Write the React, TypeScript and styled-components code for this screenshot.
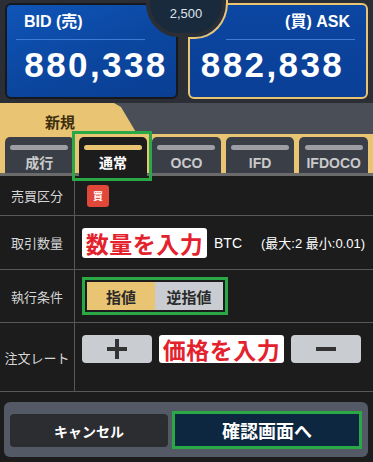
import styled, { createGlobalStyle } from "styled-components";

const GlobalStyle = createGlobalStyle`
    html, body {
        margin: 0;
        padding: 0;
        background: #1c1c1c;
    }
    * {
        box-sizing: border-box;
    }
`;

const Palette = {
    HeaderBg: "#2b2e34",
    Gold: "#e8c473",
    TabBar: "#4a4e57",
    TabBg: "#3a3e46",
    Table: "#1c1c1c",
    Line: "#585858",
    Green: "#2aa845",
    Red: "#e3222d",
    Button: "#c9ccd1",
};

const FONT = `"Liberation Sans", "Noto Sans CJK JP", sans-serif`;

const Page = styled.div`
    width: 373px;
    height: 462px;
    overflow: hidden;
    background: ${Palette.Table};
    font-family: ${FONT};
    display: flex;
    flex-direction: column;
`;

const PriceHeader = styled.header`
    position: relative;
    display: flex;
    gap: 10px;
    padding: 3px 5px 4px;
    background: ${Palette.HeaderBg};
`;

const PriceCard = styled.div<{ $side: "bid" | "ask" }>`
    height: 96px;
    border-radius: 6px;
    display: flex;
    flex-direction: column;
    align-items: ${(p) => (p.$side === "bid" ? "flex-start" : "flex-end")};
    width: ${(p) => (p.$side === "bid" ? "173px" : "auto")};
    flex: ${(p) => (p.$side === "bid" ? "none" : "1")};
    border: 2px solid ${(p) => (p.$side === "bid" ? "#15181d" : Palette.Gold)};
    background: ${(p) =>
        p.$side === "bid"
            ? "linear-gradient(160deg, #0f55b8 0%, #0b469f 55%, #0a3f93 100%)"
            : "linear-gradient(180deg, #0b46a2 0%, #0a3f96 100%)"};
    padding: ${(p) => (p.$side === "bid" ? "0 0 0 9px" : "0 11px 0 0")};
`;

const CardLabel = styled.div<{ $side: "bid" | "ask" }>`
    margin-top: 7px;
    height: 20px;
    line-height: 20px;
    font-size: 16px;
    font-weight: 700;
    color: #ffffff;
    padding: ${(p) => (p.$side === "bid" ? "0 0 0 8px" : "0 5px 0 0")};
`;

const CardRule = styled.div`
    margin-top: 7px;
    width: 129px;
    height: 1px;
    background: #3d7bd6;
`;

const CardPrice = styled.div`
    align-self: stretch;
    margin: 5px 0 0;
    height: 40px;
    line-height: 40px;
    text-align: center;
    font-size: 35px;
    font-weight: 700;
    letter-spacing: 2.4px;
    color: #ffffff;
`;

const Spread = styled.div`
    position: absolute;
    top: 0;
    left: 150px;
    width: 72px;
    height: 33px;
    background: #1a2a3d;
    border-radius: 0 0 28px 28px / 0 0 30px 30px;
    box-shadow: 0 0 0 4px ${Palette.HeaderBg};
    display: flex;
    justify-content: center;
    padding-top: 6px;
    font-size: 13px;
    color: #dfe4ea;

    &::after {
        content: "";
        position: absolute;
        top: -10px;
        left: -6px;
        right: -6px;
        bottom: -6px;
        border-right: 2px solid ${Palette.Gold};
        border-bottom: 2px solid ${Palette.Gold};
        border-radius: 0 0 33px 33px / 0 0 36px 36px;
        clip-path: inset(0 0 0 44px);
    }
`;

const TabBar = styled.div`
    height: 31px;
    background: ${Palette.TabBar};
    display: flex;
`;

const NewTab = styled.div`
    width: 137px;
    height: 100%;
    background: ${Palette.Gold};
    clip-path: polygon(0 0, 114px 0, 121px 4px, 137px 100%, 0 100%);
    display: flex;
    align-items: center;
    padding: 6px 0 0 45px;
    font-size: 15px;
    font-weight: 700;
    color: #3d2f0c;
`;

const TabRow = styled.div`
    display: flex;
    gap: 5px;
    padding: 3px 5px 0;
    height: 39px;
    background: ${Palette.Gold};
`;

const Tab = styled.div<{ $active?: boolean }>`
    position: relative;
    z-index: ${(p) => (p.$active ? 2 : 0)};
    flex: 1;
    margin-bottom: ${(p) => (p.$active ? "-3px" : "0")};
    border-radius: 5px 5px 0 0;
    background: ${(p) => (p.$active ? "#1c1c1c" : Palette.TabBg)};
    display: flex;
    flex-direction: column;
    align-items: center;
    padding-top: 8px;
    font-size: 14px;
    line-height: 18px;
    font-weight: 700;
    color: ${(p) => (p.$active ? "#ffffff" : "#c9cacc")};

    &::before {
        content: "";
        width: 58px;
        height: 5px;
        border-radius: 3px;
        background: ${(p) => (p.$active ? Palette.Gold : "#9c9ea3")};
        margin-bottom: 4px;
    }

    ${(p) =>
        p.$active &&
        `
        &::after {
            content: "";
            position: absolute;
            top: -6px;
            left: -7px;
            right: -5px;
            bottom: -5px;
            border: 3px solid ${Palette.Green};
        }
    `}
`;

const TabDivider = styled.div`
    height: 3px;
    background: #6b6b6b;
`;

const Row = styled.div<{ $height: number }>`
    display: grid;
    grid-template-columns: 75px 1fr;
    height: ${(p) => p.$height}px;
    border-bottom: 1px solid ${Palette.Line};
`;

const Label = styled.div`
    border-right: 1px solid ${Palette.Line};
    display: flex;
    align-items: center;
    justify-content: center;
    font-size: 13px;
    color: #d6d6d6;
    white-space: nowrap;
`;

const Cell = styled.div<{ $top?: number }>`
    display: flex;
    align-items: ${(p) => (p.$top ? "flex-start" : "center")};
    padding: ${(p) => (p.$top ? `${p.$top}px 0 0 7px` : "0 0 0 7px")};
    gap: 7px;
    color: #ffffff;
`;

const Badge = styled.div`
    margin-left: 5px;
    width: 22px;
    height: 22px;
    border-radius: 3px;
    background: #e2483a;
    display: flex;
    align-items: center;
    justify-content: center;
    font-size: 10px;
    font-weight: 700;
    color: #ffffff;
`;

const InputBox = styled.div`
    width: 125px;
    height: 30px;
    border-radius: 3px;
    background: #ffffff;
    display: flex;
    align-items: center;
    justify-content: center;
    font-size: 23px;
    font-weight: 700;
    color: ${Palette.Red};
    white-space: nowrap;
    letter-spacing: 0.5px;
`;

const Unit = styled.span`
    font-size: 14px;
`;

const Limits = styled.span`
    margin-left: 12px;
    font-size: 13px;
    white-space: nowrap;
`;

const Highlight = styled.div`
    border: 3px solid ${Palette.Green};
    padding: 2px;
    display: flex;
`;

const Segment = styled.div<{ $active?: boolean }>`
    width: 68px;
    height: 28px;
    display: flex;
    align-items: center;
    justify-content: center;
    background: ${(p) => (p.$active ? Palette.Gold : Palette.Button)};
    font-size: 15px;
    font-weight: 700;
    color: #2a2a2a;
`;

const StepButton = styled.div`
    width: 70px;
    height: 28px;
    border-radius: 4px;
    background: ${Palette.Button};
    display: flex;
    align-items: center;
    justify-content: center;
`;

const RateBox = styled(InputBox)`
    height: 28px;
`;

const Footer = styled.div`
    margin: 10px 5px 0 4px;
    height: 55px;
    border-radius: 6px;
    background: #545966;
    display: flex;
    align-items: center;
    gap: 4px;
    padding: 0 6px;
`;

const CancelButton = styled.div`
    width: 158px;
    height: 33px;
    margin-top: 2px;
    border-radius: 4px;
    background: #2c2d31;
    display: flex;
    align-items: center;
    justify-content: center;
    font-size: 14px;
    font-weight: 700;
    color: #ffffff;
`;

const ConfirmButton = styled.div`
    flex: 1;
    height: 38px;
    background: #0e2740;
    border: 3px solid ${Palette.Green};
    display: flex;
    align-items: center;
    justify-content: center;
    font-size: 18px;
    font-weight: 700;
    color: #ffffff;
`;

const PlusIcon = () => (
    <svg width="22" height="22" viewBox="0 0 22 22">
        <path d="M11 1v20M1 11h20" stroke="#333" strokeWidth="4" />
    </svg>
);

const MinusIcon = () => (
    <svg width="22" height="22" viewBox="0 0 22 22">
        <path d="M1 11h20" stroke="#333" strokeWidth="4" />
    </svg>
);

const tabs = ["成行", "通常", "OCO", "IFD", "IFDOCO"];

export default function App() {
    return (
        <Page>
            <GlobalStyle />
            <PriceHeader>
                <PriceCard $side="bid">
                    <CardLabel $side="bid">BID (売)</CardLabel>
                    <CardRule />
                    <CardPrice>880,338</CardPrice>
                </PriceCard>
                <PriceCard $side="ask">
                    <CardLabel $side="ask">(買) ASK</CardLabel>
                    <CardRule />
                    <CardPrice>882,838</CardPrice>
                </PriceCard>
                <Spread>2,500</Spread>
            </PriceHeader>

            <TabBar>
                <NewTab>新規</NewTab>
            </TabBar>
            <TabRow>
                {tabs.map((t) => (
                    <Tab key={t} $active={t === "通常"}>
                        {t}
                    </Tab>
                ))}
            </TabRow>
            <TabDivider />

            <Row $height={40}>
                <Label>売買区分</Label>
                <Cell>
                    <Badge>買</Badge>
                </Cell>
            </Row>
            <Row $height={54}>
                <Label>取引数量</Label>
                <Cell>
                    <InputBox>数量を入力</InputBox>
                    <Unit>BTC</Unit>
                    <Limits>(最大:2 最小:0.01)</Limits>
                </Cell>
            </Row>
            <Row $height={53}>
                <Label>執行条件</Label>
                <Cell>
                    <Highlight>
                        <Segment $active>指値</Segment>
                        <Segment>逆指値</Segment>
                    </Highlight>
                </Cell>
            </Row>
            <Row $height={69}>
                <Label>注文レート</Label>
                <Cell $top={12}>
                    <StepButton>
                        <PlusIcon />
                    </StepButton>
                    <RateBox>価格を入力</RateBox>
                    <StepButton>
                        <MinusIcon />
                    </StepButton>
                </Cell>
            </Row>

            <Footer>
                <CancelButton>キャンセル</CancelButton>
                <ConfirmButton>確認画面へ</ConfirmButton>
            </Footer>
        </Page>
    );
}
